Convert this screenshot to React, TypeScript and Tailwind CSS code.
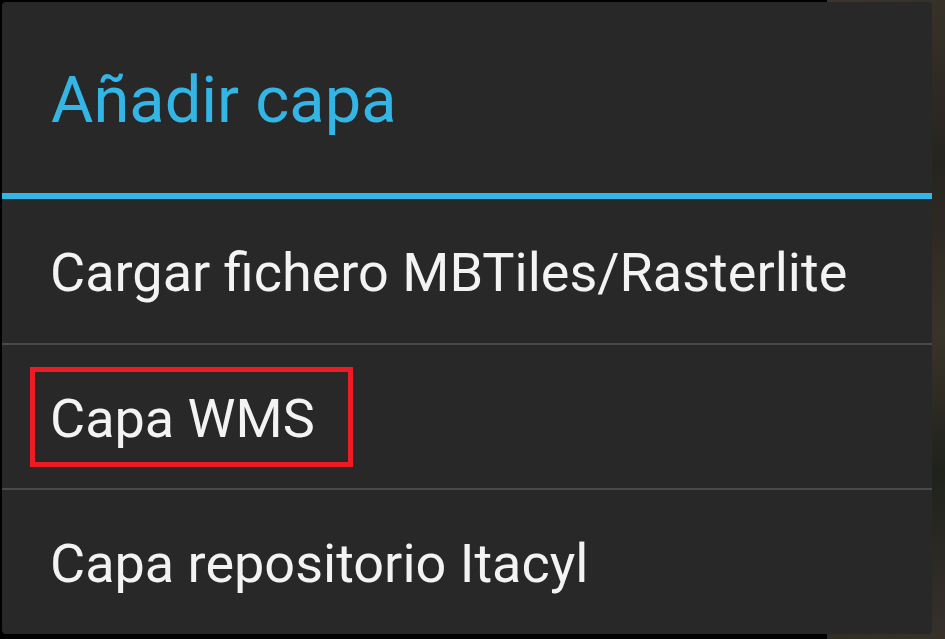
import React from "react";

const items = [
  { id: "mbtiles", label: "Cargar fichero MBTiles/Rasterlite" },
  { id: "wms", label: "Capa WMS", marked: true },
  { id: "itacyl", label: "Capa repositorio Itacyl" },
];

export default function App() {
  return (
    <div
      className="relative w-[945px] h-[639px] overflow-hidden bg-black"
      style={{ fontFamily: "Roboto, 'Noto Sans', sans-serif" }}
    >
      {/* map showing behind the dialog on the right */}
      <div className="absolute inset-y-0 left-[827px] right-0 bg-[linear-gradient(160deg,#3b352b_0%,#26241f_30%,#3a3329_55%,#1f221c_75%,#37312a_100%)]" />

      <div className="relative pl-[2px] pt-[2px]">
        <div className="w-[930px] h-[632px] rounded-[4px] bg-[#282828] flex flex-col overflow-hidden">
          <div className="h-[192px] flex items-center pl-[49px] pt-[6px]">
            <h1 className="text-[65px] leading-none text-[#33b5e5]">Añadir capa</h1>
          </div>
          <div className="h-[6px] bg-[#33b5e5]" />

          {items.map((item, i) => (
            <React.Fragment key={item.id}>
              {i > 0 && <div className="h-[2px] bg-[#4a4a4a]" />}
              <div className="relative h-[144px] flex items-center pl-[48px] pt-[4px]">
                <span className="text-[54px] leading-none text-[#f3f3f3]">{item.label}</span>
                {item.marked && (
                  <div className="absolute left-[28px] top-[22px] w-[323px] h-[100px] border-[5px] border-[#ed1c24]" />
                )}
              </div>
            </React.Fragment>
          ))}
        </div>
      </div>
    </div>
  );
}
